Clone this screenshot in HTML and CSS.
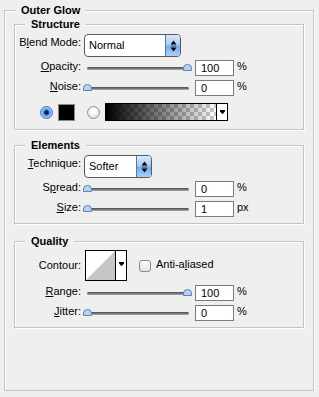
FILE: index.html
```html
<!DOCTYPE html>
<html>
<head>
<meta charset="utf-8">
<link rel="stylesheet" href="styles.css">
</head>
<body>
<fieldset class="group outer">
  <legend>Outer Glow</legend>

  <fieldset class="group inner structure">
    <legend>Structure</legend>
    <div class="row row-select">
      <span class="lbl">B<u>l</u>end Mode:</span>
      <div class="select select-blend">
        <span class="select-text">Normal</span>
        <span class="select-btn"><svg width="7" height="14" viewBox="0 0 7 14"><path d="M0.5 5.5 L3.5 1.5 L6.5 5.5 Z M0.5 8.5 L3.5 12.5 L6.5 8.5 Z" fill="#000"/><path d="M1 7 H6" stroke="#2a4f80" stroke-width="1"/></svg></span>
      </div>
    </div>
    <div class="row slider-row first">
      <span class="lbl"><u>O</u>pacity:</span>
      <div class="slider"><div class="track"></div><svg class="thumb" style="left:100px" width="9" height="7" viewBox="0 0 9 7"><path d="M0.5 6.5 V4 Q0.5 0.5 4.5 0.5 Q8.5 0.5 8.5 4 V6.5 Z" fill="#b7cff0" stroke="#5f82b3"/></svg></div>
      <span class="num">100</span>
      <span class="unit">%</span>
    </div>
    <div class="row slider-row">
      <span class="lbl"><u>N</u>oise:</span>
      <div class="slider"><div class="track"></div><svg class="thumb" style="left:0px" width="9" height="7" viewBox="0 0 9 7"><path d="M0.5 6.5 V4 Q0.5 0.5 4.5 0.5 Q8.5 0.5 8.5 4 V6.5 Z" fill="#b7cff0" stroke="#5f82b3"/></svg></div>
      <span class="num">0</span>
      <span class="unit">%</span>
    </div>
    <div class="row radio-row">
      <span class="radio on"></span>
      <span class="swatch"></span>
      <span class="radio off"></span>
      <div class="gradient">
        <span class="grad-fill"></span>
        <span class="grad-arrow"><svg width="5" height="4" viewBox="0 0 5 4"><path d="M0 0.5 H5 M0.5 1.5 H4.5 L2.5 3.8 Z" stroke="#000" stroke-width="1" fill="#000"/></svg></span>
      </div>
    </div>
  </fieldset>

  <fieldset class="group inner elements">
    <legend>Elements</legend>
    <div class="row row-select">
      <span class="lbl"><u>T</u>echnique:</span>
      <div class="select select-tech">
        <span class="select-text">Softer</span>
        <span class="select-btn"><svg width="7" height="14" viewBox="0 0 7 14"><path d="M0.5 5.5 L3.5 1.5 L6.5 5.5 Z M0.5 8.5 L3.5 12.5 L6.5 8.5 Z" fill="#000"/><path d="M1 7 H6" stroke="#2a4f80" stroke-width="1"/></svg></span>
      </div>
    </div>
    <div class="row slider-row first">
      <span class="lbl">S<u>p</u>read:</span>
      <div class="slider"><div class="track"></div><svg class="thumb" style="left:0px" width="9" height="7" viewBox="0 0 9 7"><path d="M0.5 6.5 V4 Q0.5 0.5 4.5 0.5 Q8.5 0.5 8.5 4 V6.5 Z" fill="#b7cff0" stroke="#5f82b3"/></svg></div>
      <span class="num">0</span>
      <span class="unit">%</span>
    </div>
    <div class="row slider-row">
      <span class="lbl"><u>S</u>ize:</span>
      <div class="slider"><div class="track"></div><svg class="thumb" style="left:0px" width="9" height="7" viewBox="0 0 9 7"><path d="M0.5 6.5 V4 Q0.5 0.5 4.5 0.5 Q8.5 0.5 8.5 4 V6.5 Z" fill="#b7cff0" stroke="#5f82b3"/></svg></div>
      <span class="num">1</span>
      <span class="unit">px</span>
    </div>
  </fieldset>

  <fieldset class="group inner quality">
    <legend>Quality</legend>
    <div class="row contour-row">
      <span class="lbl">Contour:</span>
      <div class="contour">
        <span class="contour-fill"><svg width="29" height="29" viewBox="0 0 29 29"><polygon points="0,29 29,0 29,29" fill="#c6c6c6"/></svg></span>
        <span class="contour-arrow"><svg width="5" height="4" viewBox="0 0 5 4"><path d="M0 0.5 H5 M0.5 1.5 H4.5 L2.5 3.8 Z" stroke="#000" stroke-width="1" fill="#000"/></svg></span>
      </div>
      <span class="checkbox"></span>
      <span class="check-text">Anti-a<u>l</u>iased</span>
    </div>
    <div class="row slider-row">
      <span class="lbl"><u>R</u>ange:</span>
      <div class="slider"><div class="track"></div><svg class="thumb" style="left:100px" width="9" height="7" viewBox="0 0 9 7"><path d="M0.5 6.5 V4 Q0.5 0.5 4.5 0.5 Q8.5 0.5 8.5 4 V6.5 Z" fill="#b7cff0" stroke="#5f82b3"/></svg></div>
      <span class="num">100</span>
      <span class="unit">%</span>
    </div>
    <div class="row slider-row">
      <span class="lbl"><u>J</u>itter:</span>
      <div class="slider"><div class="track"></div><svg class="thumb" style="left:0px" width="9" height="7" viewBox="0 0 9 7"><path d="M0.5 6.5 V4 Q0.5 0.5 4.5 0.5 Q8.5 0.5 8.5 4 V6.5 Z" fill="#b7cff0" stroke="#5f82b3"/></svg></div>
      <span class="num">0</span>
      <span class="unit">%</span>
    </div>
  </fieldset>
</fieldset>
</body>
</html>
```

FILE: styles.css
```css
html, body {
  margin: 0;
  background: #efefef;
}
body {
  padding: 4px 0 0 4px;
  font: 11px/13px "Liberation Sans", Arial, sans-serif;
  color: #000;
}
u {
  text-decoration: underline;
  text-underline-offset: 1px;
}

.group {
  margin: 0;
  box-sizing: border-box;
  min-inline-size: 0;
  border: 1px solid #c3c3c3;
  box-shadow: inset 1px 1px 0 #fff, 1px 1px 0 #fff;
}
.group > legend {
  font-weight: bold;
  line-height: 13px;
  background: #efefef;
}

.outer {
  width: 310px;
  height: 387px;
  padding: 1px 9px 0 9px;
}
.outer > legend {
  margin-left: 2px;
  padding: 0 5px;
}

.inner {
  width: 290px;
  padding: 3px 0 8px 4px;
}
.inner > legend {
  margin-left: 6px;
  padding: 0 6px;
}
.elements {
  margin-top: 9px;
  padding-bottom: 6px;
}
.quality {
  margin-top: 11px;
  padding-top: 2px;
  padding-bottom: 6px;
}

.row {
  display: flex;
  align-items: flex-start;
}
.lbl {
  flex: none;
  width: 62px;
  text-align: right;
  white-space: nowrap;
}
.row-select .lbl {
  margin-top: 2px;
}

/* select */
.select {
  display: flex;
  margin-left: 3px;
  height: 23px;
  box-sizing: border-box;
  border: 1px solid #5a5a5a;
  border-radius: 4px;
  background: #fff;
  overflow: hidden;
}
.select-blend { width: 97px; }
.select-tech { width: 68px; }
.select-text {
  flex: 1;
  padding-left: 4px;
  line-height: 21px;
}
.select-btn {
  width: 14px;
  display: flex;
  align-items: center;
  justify-content: center;
  border-left: 1px solid #4f78b0;
  background: linear-gradient(#d9e9fd, #a9cdf8 45%, #78acf1 55%, #a8d0fa);
}

/* slider rows */
.slider-row {
  margin-top: 4px;
  height: 16px;
}
.slider-row.first {
  margin-top: 3px;
}
.slider {
  position: relative;
  flex: none;
  width: 110px;
  height: 16px;
  margin-left: 2px;
}
.track {
  margin: 7px 4px 0;
  height: 3px;
  border-radius: 2px;
  background: linear-gradient(#4f4f4f, #7c7c7c 60%, #b4b4b4);
}
.thumb {
  position: absolute;
  top: 4px;
  display: block;
}
.num {
  flex: none;
  margin-left: 2px;
  width: 39px;
  height: 16px;
  box-sizing: border-box;
  border: 1px solid #7b7b7b;
  background: #fff;
  padding-left: 5px;
  line-height: 14px;
}
.unit {
  margin-left: 3px;
}

/* colour row */
.radio-row {
  margin-top: 7px;
  height: 18px;
  align-items: center;
}
.radio {
  flex: none;
  width: 13px;
  height: 13px;
  box-sizing: border-box;
  border-radius: 50%;
}
.radio.on {
  margin-left: 21px;
  border: 1px solid #3f6aa6;
  background: radial-gradient(circle at 50% 50%, #0b1f4a 0 1.8px, #3d86e6 2.6px, #6fb0f6 4px, #cfe6fd 6px);
}
.radio.off {
  margin-left: 12px;
  border: 1px solid #8d8d8d;
  background: radial-gradient(circle at 50% 35%, #ffffff 0 2px, #e4e4e4 6px);
}
.swatch {
  flex: none;
  margin-left: 5px;
  width: 17px;
  height: 17px;
  box-sizing: border-box;
  border: 1px solid #8a8a8a;
  background: #000;
}
.gradient {
  flex: none;
  display: flex;
  margin-left: 5px;
  width: 123px;
  height: 18px;
  box-sizing: border-box;
  border: 1px solid #000;
}
.grad-fill {
  flex: 1;
  background:
    linear-gradient(to right, #000, rgba(0, 0, 0, 0)),
    conic-gradient(#c8c8c8 25%, #fff 0 50%, #c8c8c8 0 75%, #fff 0) 0 0 / 8px 8px;
}
.grad-arrow {
  width: 10px;
  border-left: 1px solid #000;
  background: #fff;
  display: flex;
  align-items: center;
  justify-content: center;
}
.grad-arrow svg,
.contour-arrow svg {
  display: block;
}

/* contour row */
.contour-row {
  align-items: center;
  height: 31px;
}
.contour {
  flex: none;
  display: flex;
  margin-left: 4px;
  width: 42px;
  height: 31px;
  box-sizing: border-box;
  border: 1px solid #000;
  background: #fff;
}
.contour-fill {
  width: 29px;
  height: 29px;
}
.contour-fill svg {
  display: block;
}
.contour-arrow {
  flex: 1;
  border-left: 1px solid #000;
  display: flex;
  align-items: center;
  justify-content: center;
  padding-bottom: 3px;
}
.checkbox {
  flex: none;
  margin-left: 12px;
  width: 12px;
  height: 12px;
  box-sizing: border-box;
  border: 1px solid #8a8a8a;
  border-radius: 3px;
  background: linear-gradient(#fdfdfd, #e2e2e2);
}
.check-text {
  margin-left: 5px;
  margin-bottom: 3px;
}
```
